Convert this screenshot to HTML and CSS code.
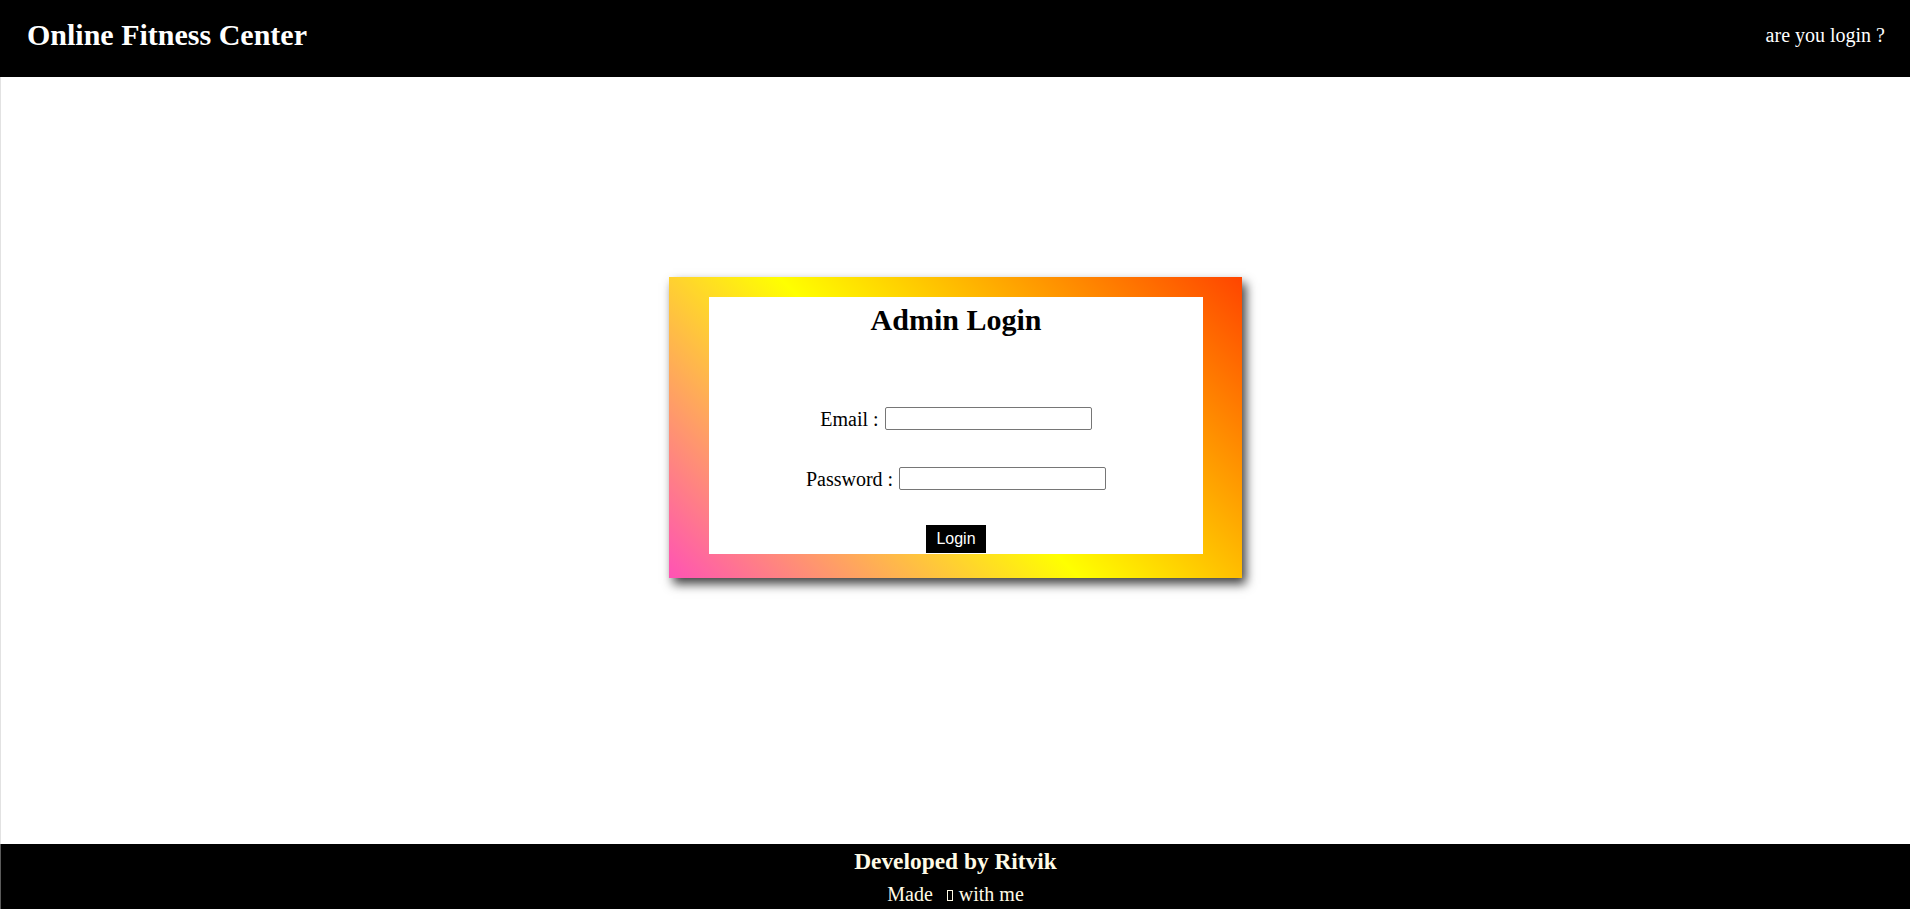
FILE: index.html
```html
<!DOCTYPE html>
<html lang="en">
<head>
<meta charset="utf-8">
<title>Online Fitness Center - Admin Login</title>
<link rel="stylesheet" href="styles.css">
</head>
<body>
  <header class="topbar">
    <h1 class="brand">Online Fitness Center</h1>
    <a class="login-link" href="#">are you login ?</a>
  </header>

  <main class="main">
    <div class="card">
      <form class="card-inner">
        <h2 class="card-title">Admin Login</h2>
        <div class="field field-first">
          <label class="field-label" for="email">Email :</label>
          <input class="field-input" id="email" type="text">
        </div>
        <div class="field field-second">
          <label class="field-label" for="password">Password :</label>
          <input class="field-input" id="password" type="password">
        </div>
        <div class="actions">
          <button class="login-btn" type="button">Login</button>
        </div>
      </form>
    </div>
  </main>

  <footer class="footer">
    <h3 class="footer-title">Developed by Ritvik</h3>
    <p class="footer-note">Made <span class="tofu"></span> with me</p>
  </footer>
</body>
</html>
```

FILE: styles.css
```css
html, body {
  margin: 0;
  padding: 0;
}

body {
  width: 1910px;
  height: 909px;
  font-family: "Liberation Serif", "Times New Roman", serif;
  background: #ffffff;
  color: #000000;
  display: flex;
  flex-direction: column;
  overflow: hidden;
}

.topbar {
  height: 77px;
  box-sizing: border-box;
  background: #000000;
  color: #ffffff;
  display: flex;
  align-items: center;
  justify-content: space-between;
  padding: 0 25px 7px 27px;
  flex: 0 0 auto;
}

.brand {
  margin: 0;
  font-size: 30px;
  font-weight: bold;
  line-height: 34px;
}

.login-link {
  color: #ffffff;
  text-decoration: none;
  font-size: 20px;
  line-height: 22px;
}

.main {
  flex: 1 1 auto;
  border-left: 1px solid #e2e2e2;
  display: flex;
  flex-direction: column;
  align-items: center;
}

.card {
  margin-top: 200px;
  width: 573px;
  height: 301px;
  box-sizing: border-box;
  padding: 20px 39px 24px 40px;
  background: linear-gradient(45deg, #ff52b5 0%, #ffff00 47%, #ff4500 100%);
  box-shadow: 4px 6px 10px rgba(0, 0, 0, 0.75);
}

.card-inner {
  background: #ffffff;
  height: 257px;
  box-sizing: border-box;
  padding-top: 6px;
  display: flex;
  flex-direction: column;
  align-items: center;
}

.card-title {
  margin: 0;
  font-size: 30px;
  font-weight: bold;
  line-height: 34px;
}

.field {
  height: 23px;
  display: flex;
  align-items: center;
  justify-content: center;
  gap: 6px;
}

.field-first {
  margin-top: 70px;
}

.field-second {
  margin-top: 37px;
}

.field-label {
  font-size: 20px;
  line-height: 22px;
}

.field-input {
  width: 207px;
  height: 23px;
  box-sizing: border-box;
  margin: 0;
  border: 1px solid #767676;
  border-radius: 2px;
  padding: 1px 2px;
  background: #ffffff;
  font-family: "Liberation Sans", Arial, sans-serif;
  font-size: 16px;
}

.actions {
  margin-top: 35px;
  display: flex;
  justify-content: center;
}

.login-btn {
  width: 60px;
  height: 28px;
  margin: 0;
  padding: 0;
  border: none;
  background: #000000;
  color: #ffffff;
  font-family: "Liberation Sans", Arial, sans-serif;
  font-size: 16px;
  line-height: 28px;
  cursor: pointer;
}

.footer {
  height: 65px;
  box-sizing: border-box;
  flex: 0 0 auto;
  background: #000000;
  color: #fffbe6;
  border-left: 1px solid #5a5a5a;
  text-align: center;
  padding-top: 4px;
}

.footer-title {
  margin: 0;
  font-size: 23.4px;
  font-weight: bold;
  line-height: 26px;
}

.footer-note {
  margin: 9px 0 0 0;
  font-size: 20px;
  line-height: 22px;
}

.tofu {
  display: inline-block;
  box-sizing: border-box;
  width: 6px;
  height: 11px;
  border: 1px solid #fffbe6;
  margin: 0 1px 0 9px;
  vertical-align: 0;
}
```
